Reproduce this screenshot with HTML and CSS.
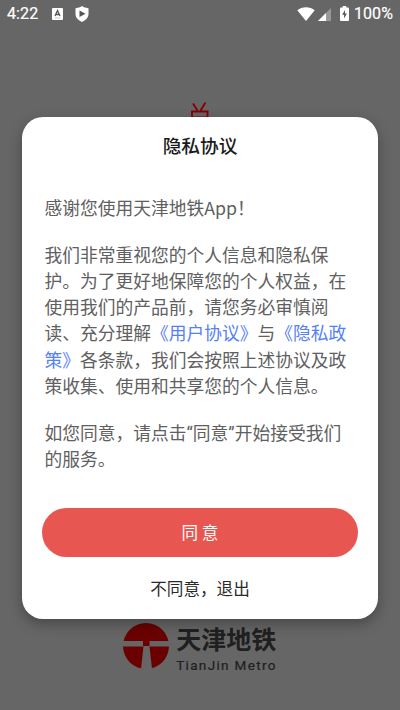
FILE: index.html
```html
<!DOCTYPE html>
<html lang="zh-CN">
<head>
<meta charset="utf-8">
<title>隐私协议</title>
<link rel="stylesheet" href="styles.css">
</head>
<body>
<div class="screen">
  <header class="status">
    <span class="time">4:22</span>
    <svg class="ic-a" width="11" height="12" viewBox="0 0 11 12"><rect width="11" height="12" rx="1" fill="#fff"/><path d="M3 8 5.500 2.500 8 8M4 6.500h3" fill="none" stroke="#555" stroke-width="1.300"/><path d="M2.500 10h6" stroke="#bbb" stroke-width=".8"/></svg>
    <svg class="ic-shield" width="14" height="16" viewBox="0 0 14 16"><path d="M7 0 9 1.300 13.500 2.200V8c0 3.500-3 6.500-6.500 8C3.500 14.500.5 11.500.5 8V2.200L5 1.300Z" fill="#fff"/><path d="M4.500 4.500 10.500 7.700 4.500 11Z" fill="#555"/></svg>
    <span class="grow"></span>
    <svg class="ic-wifi" width="18" height="14" viewBox="0 0 18 14"><path d="M9 14 .3 3.300C5-.7 13-.7 17.700 3.300Z" fill="#fff"/></svg>
    <svg class="ic-signal" width="13" height="13" viewBox="0 0 13 13"><path d="M13 0v13H0Z" fill="#999"/><path d="M8 5v8H0Z" fill="#fff"/></svg>
    <svg class="ic-battery" width="9" height="15" viewBox="0 0 9 15"><path d="M2.700 0h3.600v1.500H8q1 0 1 1V14q0 1-1 1H1q-1 0-1-1V2.500q0-1 1-1h1.700Z" fill="#fff"/><path d="M5 4 2.200 8.700h1.900V12.500L6.900 7.500H5Z" fill="#555"/></svg>
    <span class="percent">100%</span>
  </header>
  <svg class="mark" width="22" height="40" viewBox="0 0 22 40"><path d="M4 1.500 8.500 8.500M16.500.5 11.500 8.500M2 9.500h17.500M3 9.500v10h15.500v-10M3 15.300h15" fill="none" stroke="#850006" stroke-width="1.800"/></svg>
  <main class="dialog">
    <h1>隐私协议</h1>
    <div class="copy">
      <p>感谢您使用天津地铁App！</p>
      <p>我们非常重视您的个人信息和隐私保<br>护。为了更好地保障您的个人权益，在<br>使用我们的产品前，请您务必审慎阅<br>读、充分理解<a>《用户协议》</a>与<a>《隐私政<br>策》</a>各条款，我们会按照上述协议及政<br>策收集、使用和共享您的个人信息。</p>
      <p>如您同意，请点击<span class="quote">“</span>同意<span class="quote">”</span>开始接受我们<br>的服务。</p>
    </div>
    <button class="agree">同 意</button>
    <button class="decline">不同意，退出</button>
  </main>
  <footer class="brand">
    <svg width="46" height="46" viewBox="0 0 46 46"><circle cx="23" cy="23" r="23" fill="#6b0000"/><path d="M0 18h20v5h6.500v-5H46v5.500H26.500L29 46H18L20.500 23.500H0Z" fill="#666"/></svg>
    <div class="brand-text"><div class="brand-cn">天津地铁</div><div class="brand-en">TianJin Metro</div></div>
  </footer>
</div>
</body>
</html>
```
FILE: styles.css
```css
body {
  margin: 0;
  font-family: "Noto Sans CJK SC", sans-serif;
}
.screen {
  position: relative;
  width: 400px;
  height: 710px;
  overflow: hidden;
  background: #666;
  display: flex;
  flex-direction: column;
  align-items: center;
}
.status {
  box-sizing: border-box;
  width: 100%;
  height: 28px;
  padding: 0 7px;
  display: flex;
  align-items: center;
  color: #fff;
  font: 400 16px/28px Roboto, sans-serif;
  letter-spacing: .1px;
}
.status svg { flex: none; }
.grow { flex: 1; }
.time { width: 45px; -webkit-text-stroke: .2px #fff; }
.percent { -webkit-text-stroke: .2px #fff; }
.ic-shield { margin-left: 12px; }
.ic-wifi { margin-top: -1px; }
.ic-signal { margin: 0 0 0 3px; }
.ic-battery { margin: -1px 5px 0 9px; }
.mark { margin-top: 74px; flex: none; }
.dialog {
  position: absolute;
  left: 22px;
  top: 117px;
  width: 356px;
  height: 502px;
  box-sizing: border-box;
  padding: 14px 20px 0;
  display: flex;
  flex-direction: column;
  border-radius: 21px;
  background: #fff;
  box-shadow: 0 5px 14px rgba(0, 0, 0, .3);
}
h1 {
  margin: 0;
  text-align: center;
  font-size: 18.700px;
  line-height: 28px;
  font-weight: 500;
  color: #1a1a1a;
}
.copy {
  margin: 34.500px 0 0 2.500px;
  font-size: 17.750px;
  line-height: 26.200px;
  color: #606060;
  white-space: nowrap;
}
.copy p { margin: 0 0 21px; }
.copy a { color: #5580f8; }
.quote { font-family: Roboto, sans-serif; line-height: 1; }
button {
  border: 0;
  padding: 0;
  font-family: inherit;
}
.agree {
  height: 49px;
  margin-top: 15.200px;
  border-radius: 25px;
  background: #e75650;
  color: #fff;
  font-size: 16.600px;
}
.decline {
  height: 30px;
  margin-top: 16px;
  background: none;
  color: #2a2a2a;
  font-size: 16.600px;
}
.brand {
  margin-top: 481px;
  display: flex;
  gap: 7px;
  color: #202020;
}
.brand-cn {
  font-size: 25px;
  line-height: 31px;
  font-weight: 700;
}
.brand-en {
  margin-top: 2px;
  font: 400 13.500px/18px Roboto, sans-serif;
  letter-spacing: 1.350px;
  -webkit-text-stroke: .2px #202020;
}
```
